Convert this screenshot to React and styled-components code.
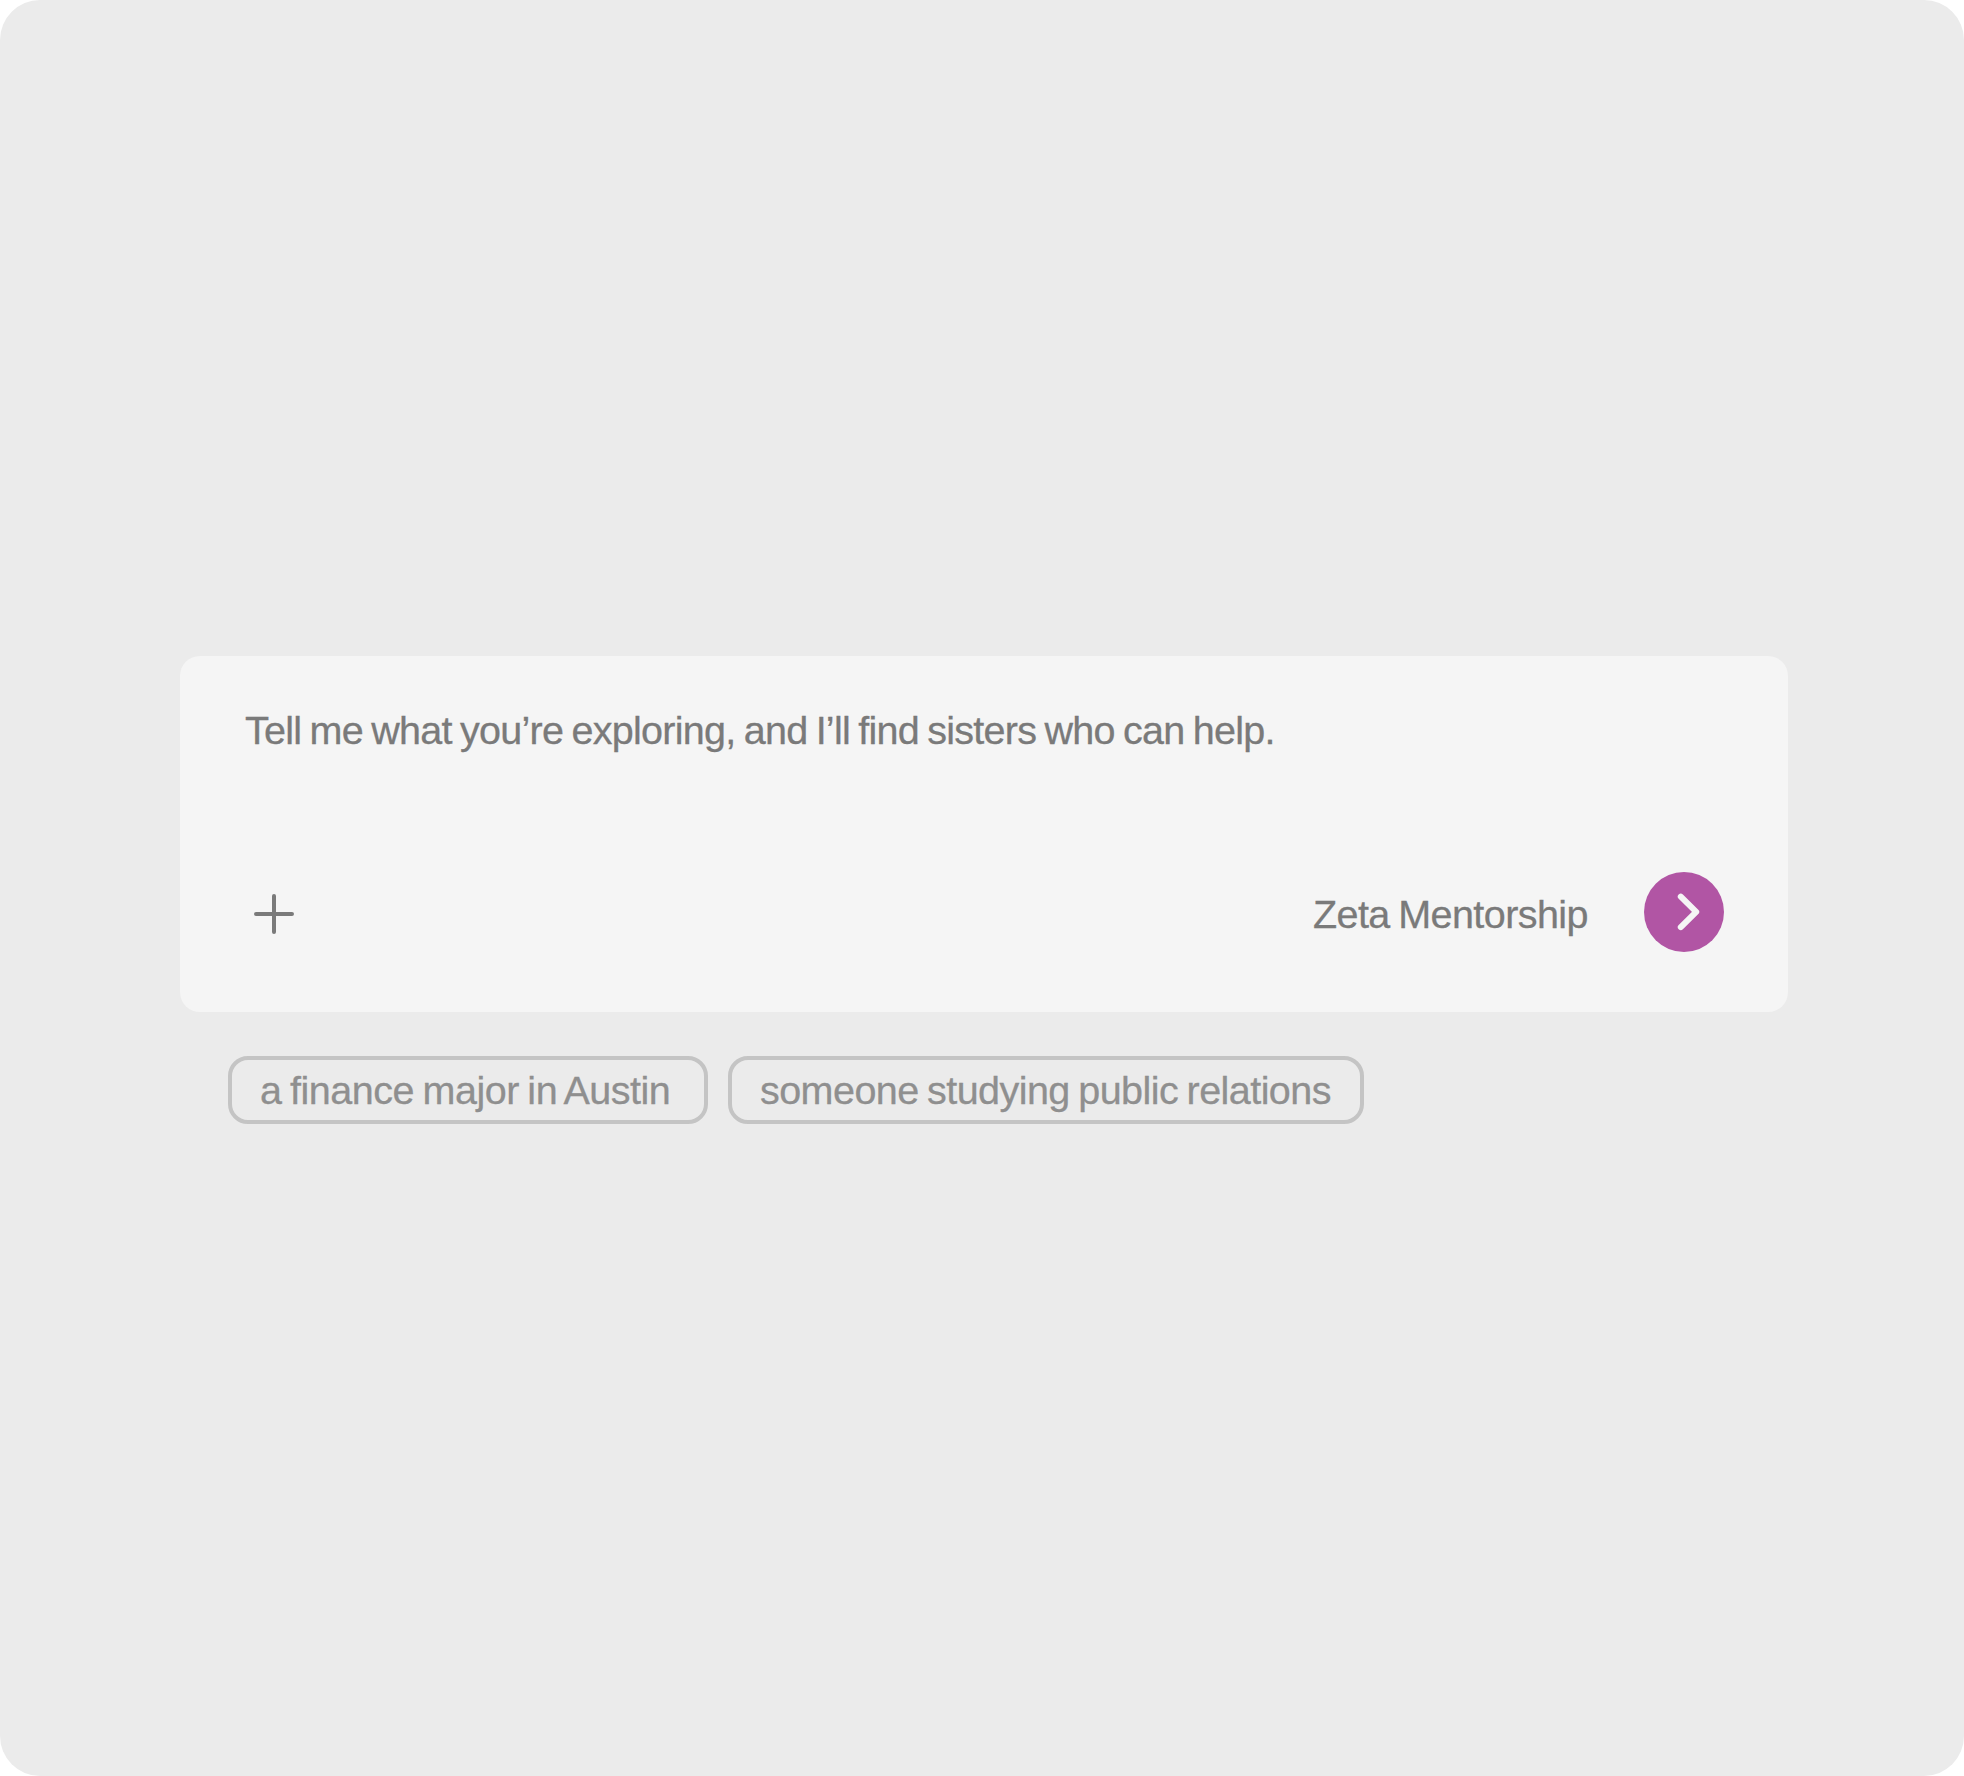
import React from 'react'
import styled, { createGlobalStyle } from 'styled-components'

const GlobalStyle = createGlobalStyle`
  * {
    box-sizing: border-box;
  }

  body {
    margin: 0;
    background-color: #ffffff;
    font-family: 'Liberation Sans', Arial, sans-serif;
  }
`

const Page = styled.main`
  width: 1964px;
  height: 1776px;
  padding: 656px 176px 0 180px;
  border-radius: 40px;
  background-color: #ebebeb;
`

const Text = styled.span`
  font-size: 39.5px;
  line-height: 48px;
  letter-spacing: ${(props) => props.$spacing}px;
  word-spacing: -2px;
  white-space: nowrap;
  -webkit-text-stroke: 0.3px currentColor;
`

const Composer = styled.section`
  display: flex;
  flex-direction: column;
  justify-content: space-between;
  height: 356px;
  padding: 50px 64px 60px;
  border-radius: 20px;
  background-color: #f5f5f5;
  color: #7a7a7a;
`

const Prompt = styled(Text)`
  padding-left: 1px;
`

const Row = styled.div`
  display: flex;
  justify-content: space-between;
  align-items: center;
`

const Actions = styled(Row)`
  gap: 56px;
`

const Label = styled(Text)`
  padding-top: 4px;
`

const IconButton = styled.button`
  display: flex;
  padding: 4px 10px 0;
  border: 0;
  background: none;
  color: inherit;
`

const SendButton = styled(IconButton)`
  width: 80px;
  height: 80px;
  padding: 0;
  border-radius: 50%;
  background-color: #b155a4;
  color: #f5f5f5;
`

const Chips = styled.div`
  display: flex;
  gap: 20px;
  padding: 44px 48px 0;
`

const Chip = styled.button`
  display: flex;
  align-items: center;
  width: ${(props) => props.$width}px;
  height: 68px;
  padding: 0 0 0 28px;
  border: 4px solid #c4c4c4;
  border-radius: 20px;
  background: none;
  color: #8f8f8f;
  font-family: inherit;
`

const PlusIcon = () => (
  <svg width="40" height="40" viewBox="0 0 40 40" fill="none">
    <path d="M20 2v36M2 20h36" stroke="currentColor" strokeWidth="4" strokeLinecap="round" />
  </svg>
)

const ChevronIcon = () => (
  <svg width="80" height="80" viewBox="0 0 80 80" fill="none">
    <path
      d="M36.8 24.7 52.2 39.9 36.8 55.1"
      stroke="currentColor"
      strokeWidth="6"
      strokeLinecap="round"
      strokeLinejoin="round"
    />
  </svg>
)

const suggestions = [
  { text: 'a finance major in Austin', width: 480, spacing: -0.48 },
  { text: 'someone studying public relations', width: 636, spacing: -0.55 },
]

const App = () => {
  return (
    <Page>
      <GlobalStyle />
      <Composer>
        <Prompt $spacing={-0.73}>Tell me what you’re exploring, and I’ll find sisters who can help.</Prompt>
        <Row>
          <IconButton aria-label="Add">
            <PlusIcon />
          </IconButton>
          <Actions>
            <Label $spacing={-0.56}>Zeta Mentorship</Label>
            <SendButton aria-label="Send">
              <ChevronIcon />
            </SendButton>
          </Actions>
        </Row>
      </Composer>
      <Chips>
        {suggestions.map(({ text, width, spacing }) => (
          <Chip key={text} $width={width}>
            <Text $spacing={spacing}>{text}</Text>
          </Chip>
        ))}
      </Chips>
    </Page>
  )
}

export default App
